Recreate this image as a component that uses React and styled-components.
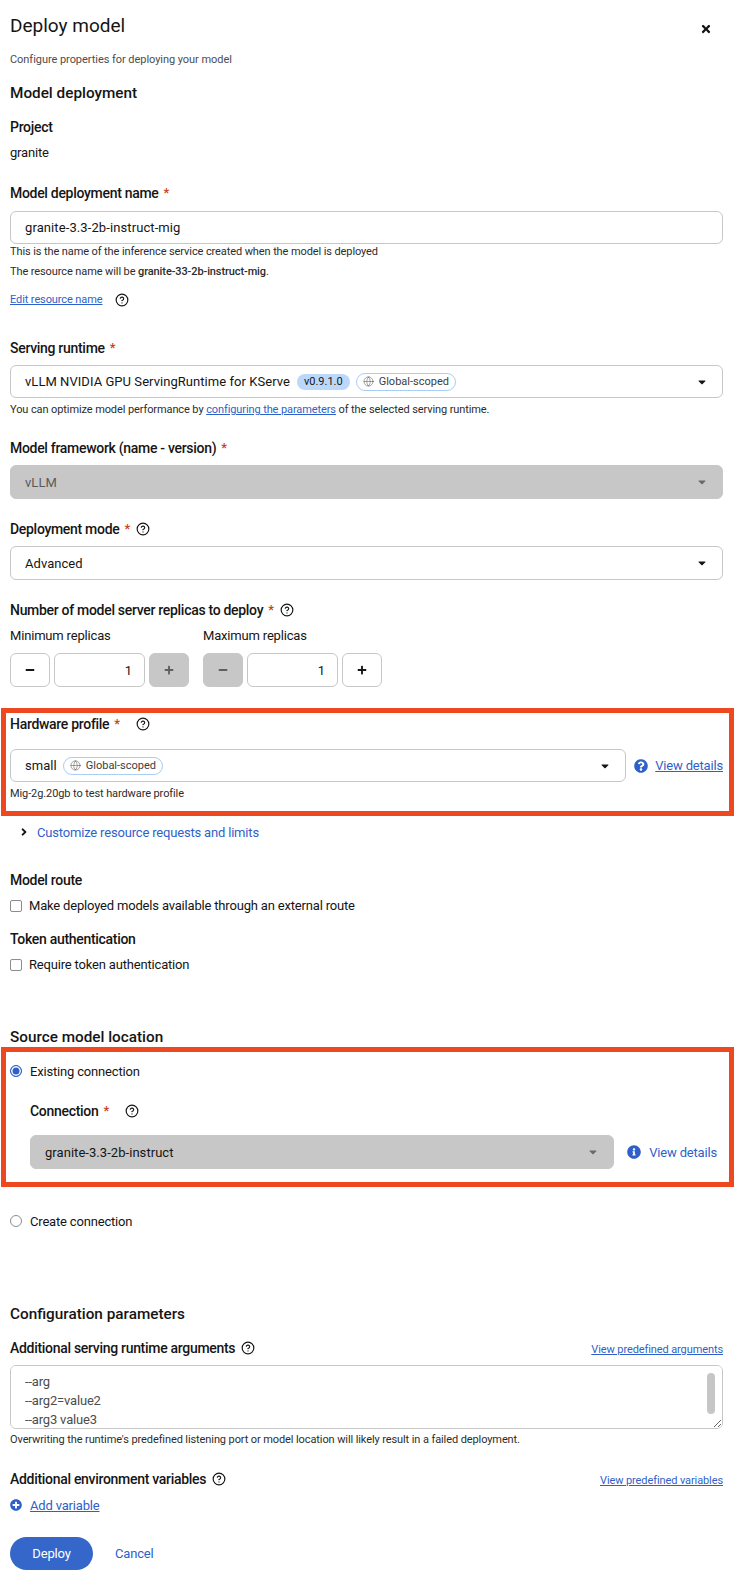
import React from 'react'
import styled, { createGlobalStyle } from 'styled-components'
import { CircleHelp, Globe } from 'lucide-react'
import { FaCaretDown, FaTimes, FaAngleRight, FaMinus, FaPlus, FaQuestionCircle, FaInfoCircle, FaPlusCircle } from 'react-icons/fa'

const fontStack = `Roboto, "Liberation Sans", sans-serif`
const blue = '#2f5fc9'
const gray = '#c7c7c7'

const GlobalStyle = createGlobalStyle`
  html, body {
    margin: 0;
    background: #fff;
  }
  body {
    font-family: ${fontStack};
    color: #151515;
    font-size: 13px;
    letter-spacing: -0.18px;
  }
`

const Page = styled.main`
  width: 738px;
  height: 1582px;
  box-sizing: border-box;
  padding: 10px 15px 0 10px;
  overflow: hidden;
`

const Header = styled.header`
  display: flex;
  justify-content: space-between;
  height: 32px;
`

const Title = styled.h1`
  margin: 0;
  font-size: 19px;
  line-height: 32px;
  font-weight: 400;
  letter-spacing: 0;
`

const CloseButton = styled.span`
  display: flex;
  margin: 13px 11px 0 0;
  font-size: 12px;
`

const Subtitle = styled.p`
  margin: 9px 0 0;
  font-size: 11px;
  line-height: 18px;
  letter-spacing: -0.05px;
  color: #4d4d4d;
`

const SectionTitle = styled.h2`
  margin: ${(p) => p.$top}px 0 0;
  font-size: 15.3px;
  line-height: ${(p) => p.$height || 20}px;
  font-weight: 500;
  letter-spacing: 0;
`

const Label = styled.div`
  display: flex;
  align-items: center;
  margin-top: ${(p) => p.$top ?? 20}px;
  height: 20px;
  font-size: 14px;
  font-weight: 500;
  line-height: 20px;
  letter-spacing: -0.3px;
`

const Required = styled.span`
  color: #c9401c;
  font-size: 13px;
  margin-left: ${(p) => p.$left ?? 5}px;
`

const HelpIcon = styled(CircleHelp).attrs({ size: 14, strokeWidth: 2 })`
  margin-left: ${(p) => p.$left ?? 6}px;
  flex: none;
`

const PlainValue = styled.div`
  margin-top: 6px;
  line-height: 20px;
`

const TextInput = styled.div`
  margin-top: 8px;
  height: 33px;
  box-sizing: border-box;
  padding: 0 14px;
  display: flex;
  align-items: center;
  letter-spacing: 0.1px;
  border: 1px solid ${gray};
  border-radius: 6px;
`

const Helper = styled.div`
  margin-top: ${(p) => p.$top ?? 4}px;
  font-size: 11px;
  line-height: 16px;
  letter-spacing: -0.1px;
  color: #2c2c2c;
`

const Strong = styled.strong`
  font-weight: 500;
`

const SmallLink = styled.a`
  color: ${blue};
  font-size: 11px;
  line-height: 16px;
  letter-spacing: -0.1px;
  font-weight: 400;
  text-decoration: underline;
`

const EditRow = styled.div`
  display: flex;
  align-items: center;
  margin-top: 12px;
  height: 16px;
`

const SelectBox = styled.div`
  flex: 1;
  min-width: 0;
  margin-top: ${(p) => p.$top ?? 7}px;
  height: ${(p) => p.$height || 34}px;
  box-sizing: border-box;
  display: flex;
  align-items: center;
  padding: 0 14px;
  letter-spacing: 0.05px;
  border-radius: 6px;
  border: 1px solid ${gray};
  background: ${(p) => (p.$disabled ? gray : '#fff')};
  color: ${(p) => (p.$muted ? '#5a5a5a' : 'inherit')};
`

const Caret = styled(FaCaretDown)`
  margin-left: auto;
  font-size: 12px;
  color: ${(p) => (p.$disabled ? '#6a6a6a' : '#151515')};
`

const VersionBadge = styled.span`
  margin-left: 7px;
  height: 16px;
  padding: 0 7px;
  display: flex;
  align-items: center;
  font-size: 11px;
  letter-spacing: 0;
  border-radius: 999px;
  background: #bbd8fa;
`

const ScopeBadge = styled.span`
  margin-left: 6px;
  height: 16px;
  padding: 0 6px;
  display: flex;
  align-items: center;
  gap: 5px;
  font-size: 11px;
  letter-spacing: 0;
  color: #3d3d3d;
  border-radius: 999px;
  border: 1px solid #a9cdf7;
`

const ReplicaGrid = styled.div`
  display: flex;
  gap: 14px;
  margin-top: 6px;
`

const ReplicaColumn = styled.div`
  width: 179px;
`

const ReplicaLabel = styled.div`
  line-height: 20px;
`

const Stepper = styled.div`
  display: flex;
  gap: 4px;
  margin-top: 7px;
`

const StepButton = styled.span`
  width: 40px;
  height: 34px;
  box-sizing: border-box;
  display: flex;
  align-items: center;
  justify-content: center;
  font-size: 10px;
  border-radius: 6px;
  border: 1px solid ${gray};
  background: ${(p) => (p.$disabled ? gray : '#fff')};
  color: ${(p) => (p.$disabled ? '#5f5f5f' : '#151515')};
`

const StepValue = styled.span`
  width: 91px;
  height: 34px;
  box-sizing: border-box;
  display: flex;
  align-items: center;
  justify-content: flex-end;
  padding-right: 12px;
  border: 1px solid ${gray};
  border-radius: 6px;
`

const Highlight = styled.section`
  margin: ${(p) => p.$top || 0}px -11px 0 -9px;
  padding: ${(p) => p.$pad};
  border: 5px solid #ee4821;
`

const SelectRow = styled.div`
  display: flex;
  align-items: flex-end;
`

const DetailsLink = styled.a`
  display: flex;
  align-items: center;
  gap: ${(p) => p.$gap}px;
  height: ${(p) => p.$height}px;
  margin-left: ${(p) => p.$left}px;
  color: ${blue};
  text-decoration: none;

  span {
    text-decoration: ${(p) => (p.$underline ? 'underline' : 'none')};
  }
  svg {
    font-size: 14px;
  }
`

const ExpandRow = styled.div`
  display: flex;
  align-items: center;
  margin: 6px 0 0 8px;
  height: 20px;
  color: ${blue};

  svg {
    color: #151515;
    font-size: 12px;
    margin-right: 7px;
  }
`

const CheckRow = styled.label`
  display: flex;
  align-items: center;
  gap: 7px;
  margin-top: 6px;
  height: 20px;
  line-height: 20px;
`

const CheckBox = styled.span`
  width: 12px;
  height: 12px;
  box-sizing: border-box;
  border: 1px solid #8a8d90;
  border-radius: 2px;
`

const RadioRow = styled.label`
  display: flex;
  align-items: center;
  gap: 8px;
  margin-top: ${(p) => p.$top}px;
  height: 20px;
`

const Radio = styled.span`
  width: 12px;
  height: 12px;
  box-sizing: border-box;
  border-radius: 50%;
  border: 1px solid ${(p) => (p.$checked ? blue : '#8a8d90')};
  background: ${(p) => (p.$checked ? blue : '#fff')};
  box-shadow: ${(p) => (p.$checked ? 'inset 0 0 0 1.5px #fff' : 'none')};
`

const ConnectionBlock = styled.div`
  padding-left: 20px;
`

const LabelRow = styled.div`
  display: flex;
  align-items: center;
  justify-content: space-between;
  margin-top: ${(p) => p.$top}px;
`

const RowLink = styled(SmallLink)`
  margin-top: 4px;
`

const ArgsWrap = styled.div`
  position: relative;
  margin-top: 7px;
`

const ArgsArea = styled.textarea`
  display: block;
  width: 100%;
  height: 64px;
  margin: 0;
  box-sizing: border-box;
  padding: 6px 14px 0;
  border: 1px solid ${gray};
  border-radius: 6px;
  font: inherit;
  letter-spacing: inherit;
  line-height: 19px;
  color: #4d4d4d;
  resize: vertical;
  overflow-y: scroll;
`

const ScrollThumb = styled.span`
  position: absolute;
  top: 8px;
  right: 8px;
  width: 8px;
  height: 41px;
  border-radius: 4px;
  background: #c6c6c6;
`

const AddRow = styled.div`
  display: flex;
  align-items: center;
  gap: 8px;
  margin-top: 6px;
  height: 20px;
  color: ${blue};

  span {
    text-decoration: underline;
  }
  svg {
    font-size: 12px;
  }
`

const Footer = styled.footer`
  display: flex;
  align-items: center;
  gap: 22px;
  margin-top: 22px;
`

const PrimaryButton = styled.button`
  width: 83px;
  height: 33px;
  border: 0;
  border-radius: 999px;
  background: #3566c9;
  color: #fff;
  font: inherit;
  letter-spacing: inherit;
`

const CancelLink = styled.a`
  color: ${blue};
`

const Scope = () => (
  <ScopeBadge>
    <Globe size={11} strokeWidth={1} />
    Global-scoped
  </ScopeBadge>
)

const ReplicaField = ({ label, minusOff, plusOff }) => (
  <ReplicaColumn>
    <ReplicaLabel>{label}</ReplicaLabel>
    <Stepper>
      <StepButton $disabled={minusOff}><FaMinus /></StepButton>
      <StepValue>1</StepValue>
      <StepButton $disabled={plusOff}><FaPlus /></StepButton>
    </Stepper>
  </ReplicaColumn>
)

export default function App() {
  return (
    <Page>
      <GlobalStyle />
      <Header>
        <Title>Deploy model</Title>
        <CloseButton><FaTimes /></CloseButton>
      </Header>
      <Subtitle>Configure properties for deploying your model</Subtitle>

      <SectionTitle $top={12} $height={24}>Model deployment</SectionTitle>
      <Label $top={12}>Project</Label>
      <PlainValue>granite</PlainValue>

      <Label>Model deployment name <Required>*</Required></Label>
      <TextInput>granite-3.3-2b-instruct-mig</TextInput>
      <Helper $top={0}>This is the name of the inference service created when the model is deployed</Helper>
      <Helper>The resource name will be <Strong>granite-33-2b-instruct-mig</Strong>.</Helper>
      <EditRow>
        <SmallLink>Edit resource name</SmallLink>
        <HelpIcon $left={12} />
      </EditRow>

      <Label $top={30}>Serving runtime <Required>*</Required></Label>
      <SelectBox $height={33}>
        vLLM NVIDIA GPU ServingRuntime for KServe
        <VersionBadge>v0.9.1.0</VersionBadge>
        <Scope />
        <Caret />
      </SelectBox>
      <Helper>
        You can optimize model performance by <SmallLink>configuring the parameters</SmallLink> of the selected serving runtime.
      </Helper>

      <Label>Model framework (name - version) <Required>*</Required></Label>
      <SelectBox $disabled $muted>vLLM<Caret $disabled /></SelectBox>

      <Label>Deployment mode <Required>*</Required><HelpIcon /></Label>
      <SelectBox>Advanced<Caret /></SelectBox>

      <Label>Number of model server replicas to deploy <Required>*</Required><HelpIcon /></Label>
      <ReplicaGrid>
        <ReplicaField label="Minimum replicas" plusOff />
        <ReplicaField label="Maximum replicas" minusOff />
      </ReplicaGrid>

      <Highlight $top={21} $pad="1px 6px 9px 4px">
        <Label $top={0}>Hardware profile <Required>*</Required><HelpIcon $left={16} /></Label>
        <SelectRow>
          <SelectBox $top={15} $height={33}>
            small
            <Scope />
            <Caret />
          </SelectBox>
          <DetailsLink $gap={7} $height={33} $left={8} $underline>
            <FaQuestionCircle />
            <span>View details</span>
          </DetailsLink>
        </SelectRow>
        <Helper>Mig-2g.20gb to test hardware profile</Helper>
      </Highlight>

      <ExpandRow><FaAngleRight />Customize resource requests and limits</ExpandRow>

      <Label $top={28}>Model route</Label>
      <CheckRow><CheckBox />Make deployed models available through an external route</CheckRow>
      <Label $top={13}>Token authentication</Label>
      <CheckRow><CheckBox />Require token authentication</CheckRow>

      <SectionTitle $top={52}>Source model location</SectionTitle>
      <Highlight $pad="9px 12px 13px 4px">
        <RadioRow $top={0}><Radio $checked />Existing connection</RadioRow>
        <ConnectionBlock>
          <Label>Connection <Required>*</Required><HelpIcon $left={16} /></Label>
          <SelectRow>
            <SelectBox $top={14} $disabled>granite-3.3-2b-instruct<Caret $disabled /></SelectBox>
            <DetailsLink $gap={8} $height={34} $left={13}>
              <FaInfoCircle />
              <span>View details</span>
            </DetailsLink>
          </SelectRow>
        </ConnectionBlock>
      </Highlight>
      <RadioRow $top={24}><Radio />Create connection</RadioRow>

      <SectionTitle $top={73}>Configuration parameters</SectionTitle>
      <LabelRow $top={14}>
        <Label $top={0}>Additional serving runtime arguments<HelpIcon /></Label>
        <RowLink>View predefined arguments</RowLink>
      </LabelRow>
      <ArgsWrap>
        <ArgsArea readOnly defaultValue={'--arg\n--arg2=value2\n--arg3 value3\n--arg4\n--arg5'} />
        <ScrollThumb />
      </ArgsWrap>
      <Helper $top={3}>Overwriting the runtime's predefined listening port or model location will likely result in a failed deployment.</Helper>
      <LabelRow $top={21}>
        <Label $top={0}>Additional environment variables<HelpIcon /></Label>
        <RowLink>View predefined variables</RowLink>
      </LabelRow>
      <AddRow><FaPlusCircle /><span>Add variable</span></AddRow>

      <Footer>
        <PrimaryButton>Deploy</PrimaryButton>
        <CancelLink>Cancel</CancelLink>
      </Footer>
    </Page>
  )
}
